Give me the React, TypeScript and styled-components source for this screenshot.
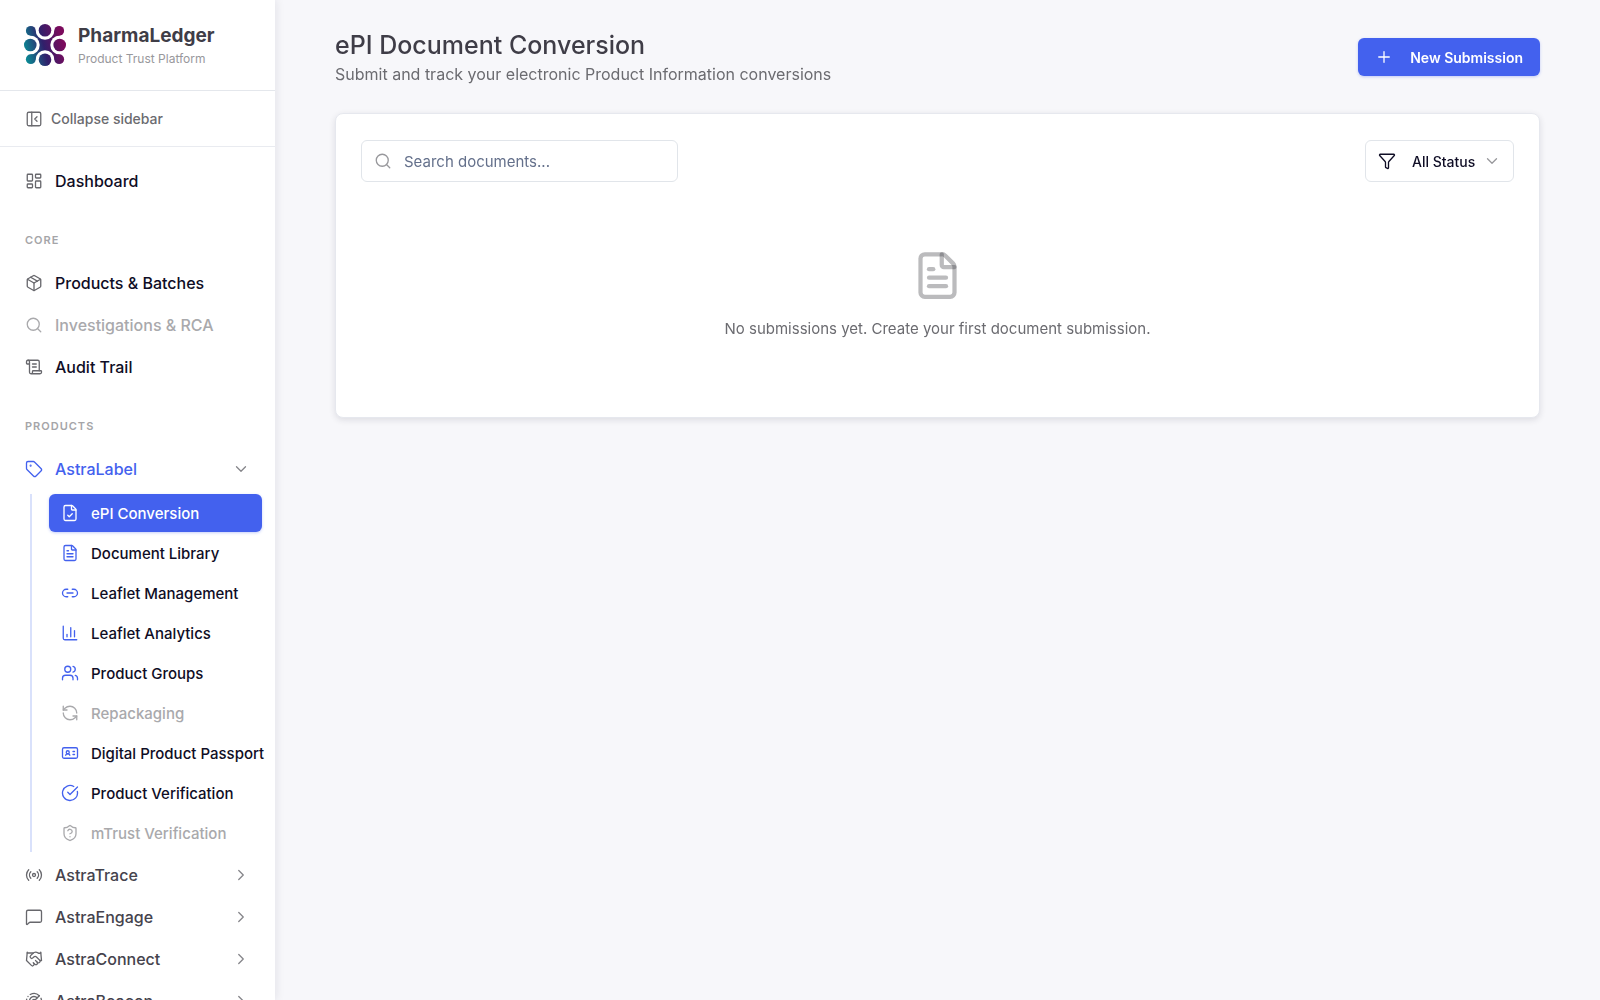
import React from 'react';
import styled, { createGlobalStyle, css } from 'styled-components';
import {
  PanelLeftClose, LayoutDashboard, Package, Search, ScrollText, Tag, ChevronDown, ChevronRight,
  FileCheck, FileText, Link2, ChartColumn, Users, RefreshCcw, IdCard, CircleCheckBig,
  ShieldQuestionMark, Radio, MessageSquare, Handshake, Radar, Plus, Funnel,
} from 'lucide-react';

const Global = createGlobalStyle`
  *, *::before, *::after { box-sizing: border-box; }
  body {
    margin: 0;
    background: #f7f7fa;
    color: #3f3d47;
    font-family: Inter, "Liberation Sans", sans-serif;
    font-size: 16px;
  }
  button, input, select { font: inherit; }
  h1, h2, p, ul { margin: 0; padding: 0; }
  ul { list-style: none; }
  svg { flex: none; }
`;

const Shell = styled.div`
  display: flex;
  height: 100vh;
`;

const Sidebar = styled.aside`
  width: 275px;
  flex: none;
  overflow-x: hidden;
  overflow-y: auto;
  scrollbar-width: none;
  background: #fff;
  box-shadow: 2px 0 8px rgba(30, 30, 60, 0.08);
`;

const Brand = styled.header`
  display: flex;
  align-items: center;
  gap: 12px;
  height: 91px;
  padding: 0 24px;
  border-bottom: 1px solid #e4e7ec;
`;

const BrandText = styled.div`
  padding-top: 2px;
`;

const BrandName = styled.div`
  font-size: 19px;
  line-height: 26px;
  font-weight: 700;
`;

const BrandTag = styled.div`
  font-size: 12px;
  line-height: 20px;
  color: #98989c;
`;

const Collapse = styled.button`
  display: flex;
  align-items: center;
  gap: 8px;
  width: 100%;
  height: 56px;
  padding: 0 25px;
  border: 0;
  border-bottom: 1px solid #e9ebf0;
  background: none;
  color: #6b6b70;
  font-size: 14px;
  font-weight: 500;
`;

const Nav = styled.nav`
  padding: 13px;
`;

const GroupTitle = styled.h2`
  margin: 24px 12px 8px;
  font-size: 11px;
  line-height: 28px;
  font-weight: 600;
  letter-spacing: 1px;
  color: #a5a5a8;
`;

type Tone = 'link' | 'muted' | 'open' | 'closed';

const tones: Record<Tone, [string, string]> = {
  link: ['#0f0d25', '#67676c'],
  muted: ['#a9a9ac', '#a9a9ac'],
  open: ['#4361ee', '#4361ee'],
  closed: ['#45434d', '#67676c'],
};

const rowStyle = css<{ $tone: Tone }>`
  display: flex;
  align-items: center;
  gap: 12px;
  width: 100%;
  height: 42px;
  padding: 0 12px;
  border: 0;
  background: none;
  font-size: 16px;
  font-weight: 500;
  text-align: left;
  text-decoration: none;
  color: ${(p) => tones[p.$tone][0]};
  svg { color: ${(p) => tones[p.$tone][1]}; }
`;

const NavLink = styled.a<{ $tone: Tone }>`${rowStyle}`;

const NavToggle = styled.button<{ $tone: Tone }>`
  ${rowStyle}
  span { flex: 1; }
  svg:last-child { color: #85858a; }
`;

const SubList = styled.ul`
  display: flex;
  flex-direction: column;
  gap: 2px;
  margin: 4px 0 2px 17px;
  padding-left: 17px;
  border-left: 2px solid #d9e1fb;
`;

const SubLink = styled.a<{ $active?: boolean; $muted?: boolean }>`
  display: flex;
  align-items: center;
  gap: 12px;
  height: 38px;
  padding: 0 0 0 12px;
  border-radius: 6px;
  font-size: 15px;
  font-weight: 500;
  white-space: nowrap;
  text-decoration: none;
  color: ${(p) => (p.$active ? '#fff' : p.$muted ? '#a9a9ac' : '#0f0d25')};
  background: ${(p) => (p.$active ? '#4361ee' : 'transparent')};
  box-shadow: ${(p) => (p.$active ? '0 1px 3px rgba(67, 97, 238, 0.3)' : 'none')};
  svg { color: ${(p) => (p.$active ? '#fff' : p.$muted ? '#a9a9ac' : '#4361ee')}; }
`;

const Main = styled.main`
  flex: 1;
  min-width: 0;
  padding: 28px 60px;
`;

const PageHeader = styled.header`
  display: flex;
  align-items: center;
  justify-content: space-between;
  margin-bottom: 27px;
`;

const Title = styled.h1`
  font-size: 25px;
  line-height: 34px;
  font-weight: 500;
`;

const Subtitle = styled.p`
  font-size: 16px;
  line-height: 24px;
  color: #6b6b70;
`;

const Primary = styled.button`
  display: flex;
  align-items: center;
  gap: 17px;
  height: 38px;
  padding: 0 17px;
  border: 0;
  border-radius: 6px;
  background: #4361ee;
  color: #fff;
  font-size: 14px;
  font-weight: 600;
  box-shadow: 0 1px 3px rgba(67, 97, 238, 0.3);
`;

const Card = styled.section`
  padding: 26px 25px;
  border: 1px solid #e6e8ee;
  border-radius: 8px;
  background: #fff;
  box-shadow: 0 2px 6px rgba(30, 30, 60, 0.12);
`;

const Toolbar = styled.div`
  display: flex;
  justify-content: space-between;
`;

const Field = styled.label`
  display: flex;
  align-items: center;
  height: 42px;
  padding: 0 12px;
  border: 1px solid #e1e5ea;
  border-radius: 6px;
  background: #fff;
  color: #98989c;
`;

const SearchField = styled(Field)`
  width: 317px;
  gap: 12px;
`;

const SearchInput = styled.input`
  flex: 1;
  min-width: 0;
  padding: 0;
  border: 0;
  outline: 0;
  background: none;
  font-size: 15px;
  color: #0f0d25;
  &::placeholder { color: #64708b; opacity: 1; }
`;

const StatusField = styled(Field)`
  gap: 7px;
  svg:first-child { color: #0f0d25; margin-right: 9px; }
`;

const StatusSelect = styled.select`
  appearance: none;
  padding: 0;
  border: 0;
  outline: 0;
  background: none;
  color: #0f0d25;
  font-size: 14px;
  font-weight: 500;
`;

const Empty = styled.div`
  display: flex;
  flex-direction: column;
  align-items: center;
  gap: 16px;
  padding: 68px 0 50px;
  font-size: 15px;
  line-height: 24px;
  color: #6b6b70;
`;

const icon = { size: 18, strokeWidth: 1.75 } as const;

const Logo = () => (
  <svg width="42" height="42" viewBox="0 0 42 42" aria-hidden="true">
    <defs>
      <linearGradient id="brand" gradientUnits="userSpaceOnUse" x1="2" y1="32" x2="40" y2="22">
        <stop offset="0" stopColor="#0b8793" />
        <stop offset="0.5" stopColor="#30206b" />
        <stop offset="1" stopColor="#7b0a5c" />
      </linearGradient>
    </defs>
    <g fill="url(#brand)">
      <path d="M7 7 L35 35 M35 7 L7 35" stroke="url(#brand)" strokeWidth="7" />
      <rect x="13" y="13" width="16" height="16" />
    </g>
    <g fill="#fff">
      <circle cx="21" cy="6.3" r="9.4" />
      <circle cx="21" cy="35.7" r="9.4" />
      <circle cx="6.3" cy="21" r="9.4" />
      <circle cx="35.7" cy="21" r="9.4" />
    </g>
    <g fill="url(#brand)">
      <circle cx="21" cy="6.3" r="6.3" />
      <circle cx="21" cy="35.7" r="6.3" />
      <circle cx="6.3" cy="21" r="6.3" />
      <circle cx="35.7" cy="21" r="6.3" />
      <circle cx="6.8" cy="6.8" r="4.9" />
      <circle cx="35.2" cy="6.8" r="4.9" />
      <circle cx="6.8" cy="35.2" r="4.9" />
      <circle cx="35.2" cy="35.2" r="4.9" />
    </g>
  </svg>
);

const core = [
  { label: 'Products & Batches', Icon: Package, tone: 'link' as Tone },
  { label: 'Investigations & RCA', Icon: Search, tone: 'muted' as Tone },
  { label: 'Audit Trail', Icon: ScrollText, tone: 'link' as Tone },
];

const labelItems = [
  { label: 'ePI Conversion', Icon: FileCheck, active: true },
  { label: 'Document Library', Icon: FileText },
  { label: 'Leaflet Management', Icon: Link2 },
  { label: 'Leaflet Analytics', Icon: ChartColumn },
  { label: 'Product Groups', Icon: Users },
  { label: 'Repackaging', Icon: RefreshCcw, muted: true },
  { label: 'Digital Product Passport', Icon: IdCard },
  { label: 'Product Verification', Icon: CircleCheckBig },
  { label: 'mTrust Verification', Icon: ShieldQuestionMark, muted: true },
];

const products = [
  { label: 'AstraTrace', Icon: Radio },
  { label: 'AstraEngage', Icon: MessageSquare },
  { label: 'AstraConnect', Icon: Handshake },
  { label: 'AstraBeacon', Icon: Radar },
];

export default function App() {
  return (
    <>
      <Global />
      <Shell>
        <Sidebar>
          <Brand>
            <Logo />
            <BrandText>
              <BrandName>PharmaLedger</BrandName>
              <BrandTag>Product Trust Platform</BrandTag>
            </BrandText>
          </Brand>
          <Collapse type="button"><PanelLeftClose {...icon} />Collapse sidebar</Collapse>
          <Nav>
            <NavLink href="#dashboard" $tone="link"><LayoutDashboard {...icon} />Dashboard</NavLink>
            <GroupTitle>CORE</GroupTitle>
            {core.map(({ label, Icon, tone }) => (
              <NavLink key={label} href="#core" $tone={tone}><Icon {...icon} />{label}</NavLink>
            ))}
            <GroupTitle>PRODUCTS</GroupTitle>
            <NavToggle type="button" $tone="open" aria-expanded="true">
              <Tag {...icon} /><span>AstraLabel</span><ChevronDown {...icon} />
            </NavToggle>
            <SubList>
              {labelItems.map(({ label, Icon, active, muted }) => (
                <li key={label}>
                  <SubLink href="#label" $active={active} $muted={muted}><Icon {...icon} />{label}</SubLink>
                </li>
              ))}
            </SubList>
            {products.map(({ label, Icon }) => (
              <NavToggle key={label} type="button" $tone="closed" aria-expanded="false">
                <Icon {...icon} /><span>{label}</span><ChevronRight {...icon} />
              </NavToggle>
            ))}
          </Nav>
        </Sidebar>
        <Main>
          <PageHeader>
            <div>
              <Title>ePI Document Conversion</Title>
              <Subtitle>Submit and track your electronic Product Information conversions</Subtitle>
            </div>
            <Primary type="button"><Plus {...icon} />New Submission</Primary>
          </PageHeader>
          <Card>
            <Toolbar>
              <SearchField>
                <Search {...icon} />
                <SearchInput type="text" aria-label="Search documents" placeholder="Search documents..." />
              </SearchField>
              <StatusField>
                <Funnel {...icon} />
                <StatusSelect aria-label="Status"><option>All Status</option></StatusSelect>
                <ChevronDown {...icon} />
              </StatusField>
            </Toolbar>
            <Empty>
              <FileText size={51} strokeWidth={2} color="rgba(60, 60, 67, 0.35)" />
              <p>No submissions yet. Create your first document submission.</p>
            </Empty>
          </Card>
        </Main>
      </Shell>
    </>
  );
}
